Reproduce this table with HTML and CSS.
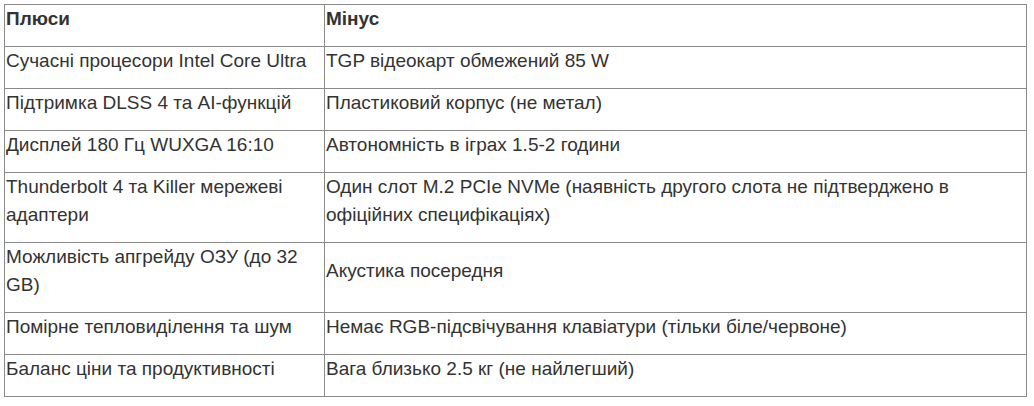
FILE: index.html
```html
<!DOCTYPE html>
<html lang="uk">
<head>
<meta charset="utf-8">
<title>Плюси та мінуси</title>
<link rel="stylesheet" href="styles.css">
</head>
<body>
<table class="pros-cons">
  <colgroup><col class="col-pros"><col class="col-cons"></colgroup>
  <tr><th>Плюси</th><th>Мінус</th></tr>
  <tr><td>Сучасні процесори Intel Core Ultra</td><td>TGP відеокарт обмежений 85 W</td></tr>
  <tr><td>Підтримка DLSS 4 та AI-функцій</td><td>Пластиковий корпус (не метал)</td></tr>
  <tr><td>Дисплей 180 Гц WUXGA 16:10</td><td>Автономність в іграх 1.5-2 години</td></tr>
  <tr><td>Thunderbolt 4 та Killer мережеві адаптери</td><td>Один слот M.2 PCIe NVMe (наявність другого слота не підтверджено в офіційних специфікаціях)</td></tr>
  <tr><td>Можливість апгрейду ОЗУ (до 32 GB)</td><td>Акустика посередня</td></tr>
  <tr><td>Помірне тепловиділення та шум</td><td>Немає RGB-підсвічування клавіатури (тільки біле/червоне)</td></tr>
  <tr><td>Баланс ціни та продуктивності</td><td>Вага близько 2.5 кг (не найлегший)</td></tr>
</table>
</body>
</html>
```
FILE: styles.css
```css
html, body {
  margin: 0;
  background: #ffffff;
}
body {
  padding: 4px;
  font-family: "Liberation Sans", Arial, sans-serif;
  font-size: 19px;
  line-height: 28px;
  color: #333333;
}
.pros-cons {
  border-collapse: collapse;
  width: 1023px;
  table-layout: fixed;
}
.col-pros { width: 320px; }
.pros-cons th,
.pros-cons td {
  border: 1px solid #8a8a8a;
  padding: 0 1px 13px 1px;
  text-align: left;
  vertical-align: middle;
}
.pros-cons th {
  font-weight: bold;
}
```
